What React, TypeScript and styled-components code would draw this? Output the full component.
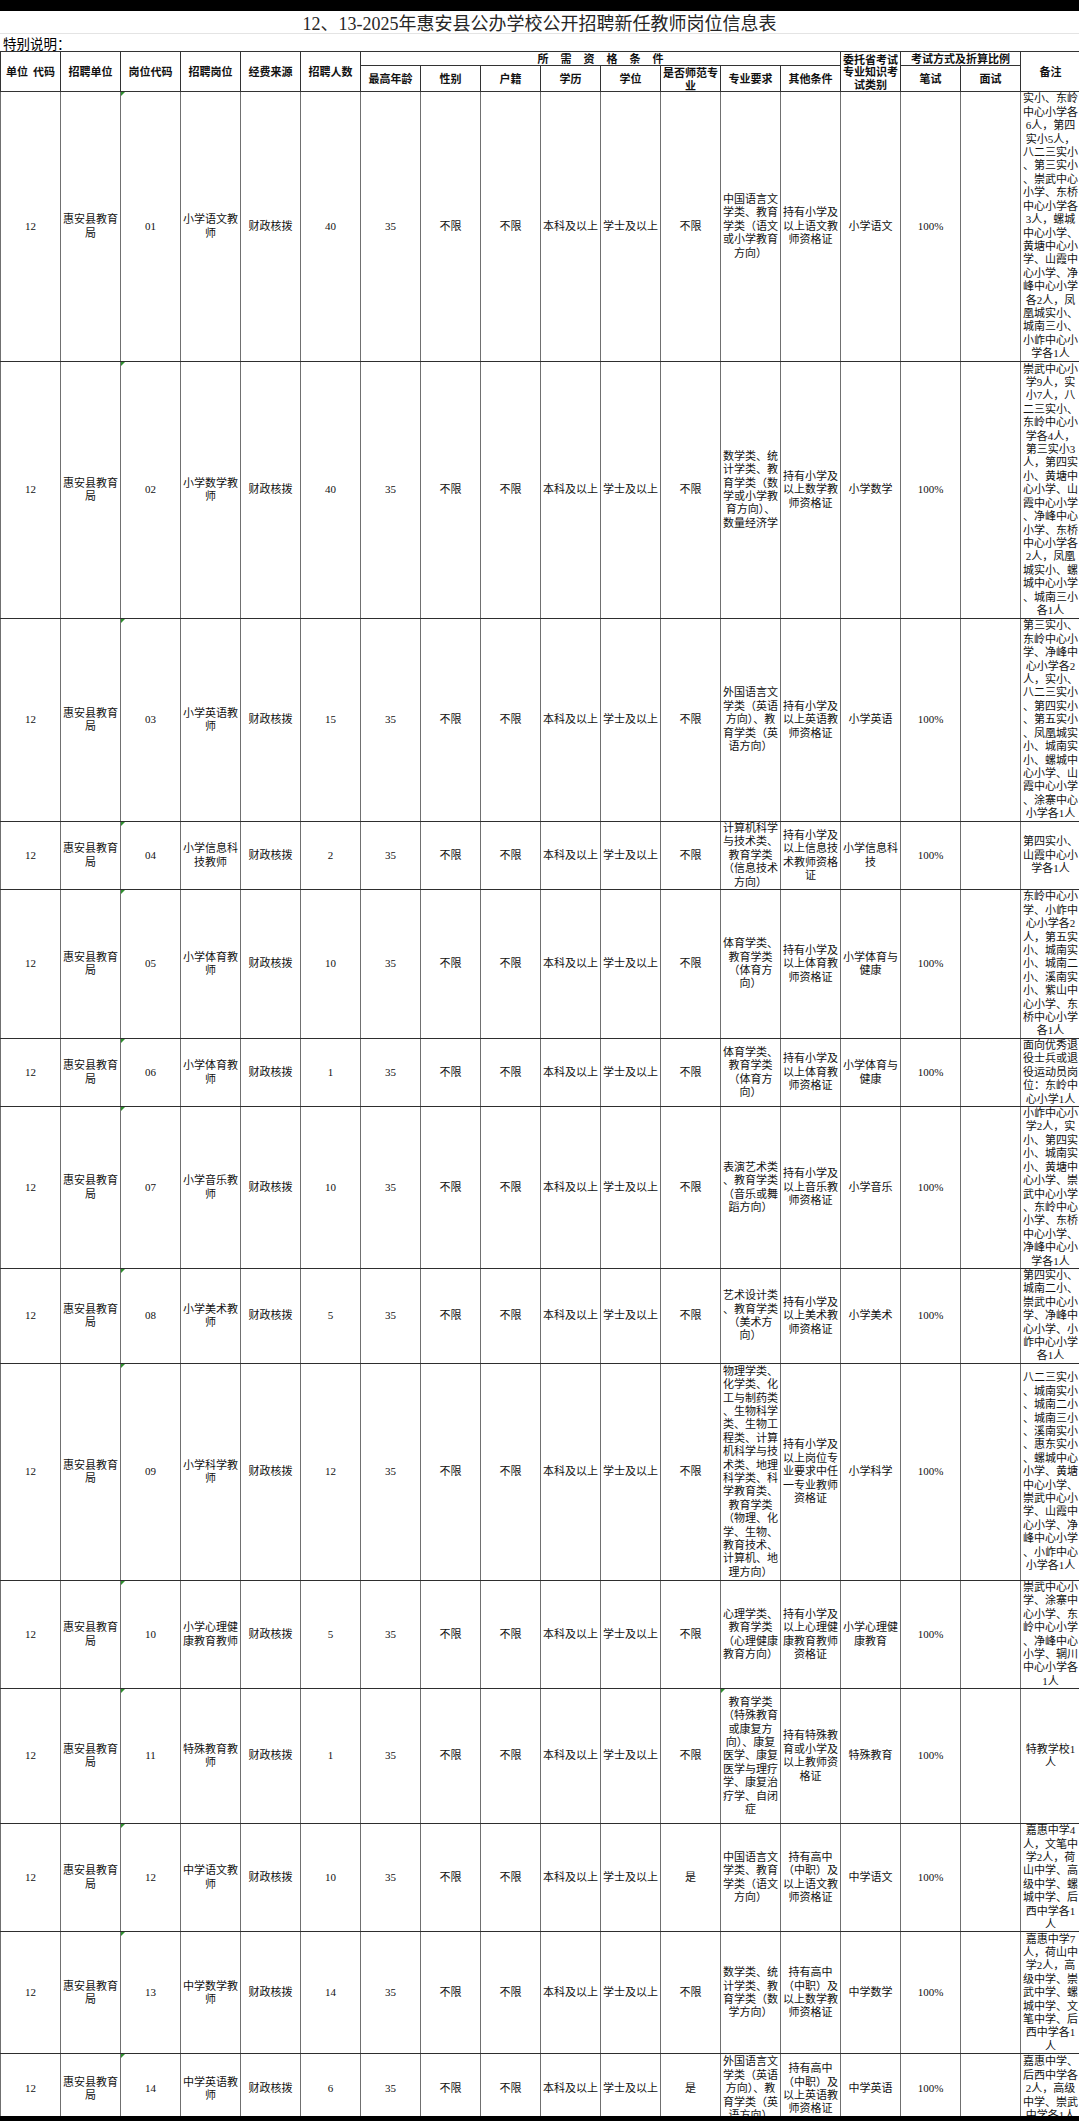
import React from 'react';
import styled, { createGlobalStyle } from 'styled-components';

interface PostRow {
  h: number;
  code: string;
  post: string;
  count: string;
  normal: string;
  major: string;
  other: string;
  exam: string;
  note: string;
  majorFlag?: boolean;
}

const rows: PostRow[] = [
  {
    h: 270,
    code: '01',
    post: '小学语文教\n师',
    count: '40',
    normal: '不限',
    major: '中国语言文\n学类、教育\n学类（语文\n或小学教育\n方向）',
    other: '持有小学及\n以上语文教\n师资格证',
    exam: '小学语文',
    note:
      '实小、东岭\n中心小学各\n6人，第四\n实小5人，\n八二三实小\n、第三实小\n、崇武中心\n小学、东桥\n中心小学各\n3人，螺城\n中心小学、\n黄塘中心小\n学、山霞中\n心小学、净\n峰中心小学\n各2人，凤\n凰城实小、\n城南三小、\n小岞中心小\n学各1人',
  },
  {
    h: 257,
    code: '02',
    post: '小学数学教\n师',
    count: '40',
    normal: '不限',
    major: '数学类、统\n计学类、教\n育学类（数\n学或小学教\n育方向）、\n数量经济学',
    other: '持有小学及\n以上数学教\n师资格证',
    exam: '小学数学',
    note:
      '崇武中心小\n学9人，实\n小7人，八\n二三实小、\n东岭中心小\n学各4人，\n第三实小3\n人，第四实\n小、黄塘中\n心小学、山\n霞中心小学\n、净峰中心\n小学、东桥\n中心小学各\n2人，凤凰\n城实小、螺\n城中心小学\n、城南三小\n各1人',
  },
  {
    h: 203,
    code: '03',
    post: '小学英语教\n师',
    count: '15',
    normal: '不限',
    major: '外国语言文\n学类（英语\n方向）、教\n育学类（英\n语方向）',
    other: '持有小学及\n以上英语教\n师资格证',
    exam: '小学英语',
    note:
      '第三实小、\n东岭中心小\n学、净峰中\n心小学各2\n人，实小、\n八二三实小\n、第四实小\n、第五实小\n、凤凰城实\n小、城南实\n小、螺城中\n心小学、山\n霞中心小学\n、涂寨中心\n小学各1人',
  },
  {
    h: 67,
    code: '04',
    post: '小学信息科\n技教师',
    count: '2',
    normal: '不限',
    major: '计算机科学\n与技术类、\n教育学类\n（信息技术\n方向）',
    other: '持有小学及\n以上信息技\n术教师资格\n证',
    exam: '小学信息科\n技',
    note: '第四实小、\n山霞中心小\n学各1人',
  },
  {
    h: 149,
    code: '05',
    post: '小学体育教\n师',
    count: '10',
    normal: '不限',
    major: '体育学类、\n教育学类\n（体育方\n向）',
    other: '持有小学及\n以上体育教\n师资格证',
    exam: '小学体育与\n健康',
    note:
      '东岭中心小\n学、小岞中\n心小学各2\n人，第五实\n小、城南实\n小、城南二\n小、溪南实\n小、紫山中\n心小学、东\n桥中心小学\n各1人',
  },
  {
    h: 68,
    code: '06',
    post: '小学体育教\n师',
    count: '1',
    normal: '不限',
    major: '体育学类、\n教育学类\n（体育方\n向）',
    other: '持有小学及\n以上体育教\n师资格证',
    exam: '小学体育与\n健康',
    note: '面向优秀退\n役士兵或退\n役运动员岗\n位：东岭中\n心小学1人',
  },
  {
    h: 161,
    code: '07',
    post: '小学音乐教\n师',
    count: '10',
    normal: '不限',
    major: '表演艺术类\n、教育学类\n（音乐或舞\n蹈方向）',
    other: '持有小学及\n以上音乐教\n师资格证',
    exam: '小学音乐',
    note:
      '小岞中心小\n学2人，实\n小、第四实\n小、城南实\n小、黄塘中\n心小学、崇\n武中心小学\n、东岭中心\n小学、东桥\n中心小学、\n净峰中心小\n学各1人',
  },
  {
    h: 95,
    code: '08',
    post: '小学美术教\n师',
    count: '5',
    normal: '不限',
    major: '艺术设计类\n、教育学类\n（美术方\n向）',
    other: '持有小学及\n以上美术教\n师资格证',
    exam: '小学美术',
    note: '第四实小、\n城南二小、\n崇武中心小\n学、净峰中\n心小学、小\n岞中心小学\n各1人',
  },
  {
    h: 217,
    code: '09',
    post: '小学科学教\n师',
    count: '12',
    normal: '不限',
    major:
      '物理学类、\n化学类、化\n工与制药类\n、生物科学\n类、生物工\n程类、计算\n机科学与技\n术类、地理\n科学类、科\n学教育类、\n教育学类\n（物理、化\n学、生物、\n教育技术、\n计算机、地\n理方向）',
    other: '持有小学及\n以上岗位专\n业要求中任\n一专业教师\n资格证',
    exam: '小学科学',
    note:
      '八二三实小\n、城南实小\n、城南二小\n、城南三小\n、溪南实小\n、惠东实小\n、螺城中心\n小学、黄塘\n中心小学、\n崇武中心小\n学、山霞中\n心小学、净\n峰中心小学\n、小岞中心\n小学各1人',
  },
  {
    h: 107,
    code: '10',
    post: '小学心理健\n康教育教师',
    count: '5',
    normal: '不限',
    major: '心理学类、\n教育学类\n（心理健康\n教育方向）',
    other: '持有小学及\n以上心理健\n康教育教师\n资格证',
    exam: '小学心理健\n康教育',
    note: '崇武中心小\n学、涂寨中\n心小学、东\n岭中心小学\n、净峰中心\n小学、辋川\n中心小学各\n1人',
  },
  {
    h: 135,
    code: '11',
    post: '特殊教育教\n师',
    count: '1',
    normal: '不限',
    major: '教育学类\n（特殊教育\n或康复方\n向）、康复\n医学、康复\n医学与理疗\n学、康复治\n疗学、自闭\n症',
    other: '持有特殊教\n育或小学及\n以上教师资\n格证',
    exam: '特殊教育',
    note: '特教学校1\n人',
    majorFlag: true,
  },
  {
    h: 108,
    code: '12',
    post: '中学语文教\n师',
    count: '10',
    normal: '是',
    major: '中国语言文\n学类、教育\n学类（语文\n方向）',
    other: '持有高中\n（中职）及\n以上语文教\n师资格证',
    exam: '中学语文',
    note: '嘉惠中学4\n人，文笔中\n学2人，荷\n山中学、高\n级中学、螺\n城中学、后\n西中学各1\n人',
  },
  {
    h: 122,
    code: '13',
    post: '中学数学教\n师',
    count: '14',
    normal: '不限',
    major: '数学类、统\n计学类、教\n育学类（数\n学方向）',
    other: '持有高中\n（中职）及\n以上数学教\n师资格证',
    exam: '中学数学',
    note: '嘉惠中学7\n人，荷山中\n学2人，高\n级中学、崇\n武中学、螺\n城中学、文\n笔中学、后\n西中学各1\n人',
  },
  {
    h: 70,
    code: '14',
    post: '中学英语教\n师',
    count: '6',
    normal: '是',
    major: '外国语言文\n学类（英语\n方向）、教\n育学类（英\n语方向）',
    other: '持有高中\n（中职）及\n以上英语教\n师资格证',
    exam: '中学英语',
    note: '嘉惠中学、\n后西中学各\n2人，高级\n中学、崇武\n中学各1人',
  },
];

const GlobalStyle = createGlobalStyle`
  html, body {
    margin: 0;
    padding: 0;
    background: #000;
  }
  body {
    font-family: "Liberation Serif", "Noto Sans CJK SC", serif;
  }
`;

const Page = styled.div`
  width: 1079px;
  height: 2121px;
  display: flex;
  flex-direction: column;
  background: #000;
  overflow: hidden;
`;

const TopBar = styled.div`
  flex: none;
  height: 11px;
  background: #000;
`;

const BottomBar = styled.div`
  flex: none;
  height: 5px;
  background: #000;
`;

const Sheet = styled.div`
  flex: 1;
  min-height: 0;
  background: #fff;
  overflow: hidden;
`;

const Title = styled.h1`
  margin: 0;
  height: 22px;
  line-height: 27px;
  font-size: 18px;
  font-weight: 400;
  text-align: center;
  color: #262626;
  font-family: "Liberation Serif", "Noto Sans CJK SC", serif;
  border-bottom: 1px solid #e4e4e4;
`;

const Note = styled.div`
  height: 17px;
  line-height: 18px;
  padding-left: 3px;
  font-size: 13.5px;
  color: #000;
  font-family: "Noto Sans CJK SC", sans-serif;
`;

const Table = styled.table`
  width: 1080px;
  table-layout: fixed;
  border-collapse: collapse;
  font-family: "Liberation Serif", "Noto Sans CJK SC", serif;
`;

const Col = styled.col`
  width: 60px;
`;

const Row = styled.tr<{ $h: number }>`
  height: ${p => p.$h}px;
`;

const HeadCell = styled.th<{ $spread?: boolean }>`
  padding: 0;
  border: 1px solid #333;
  font-family: "Noto Sans CJK SC", sans-serif;
  font-size: 11px;
  line-height: 12.5px;
  font-weight: 700;
  color: #111;
  text-align: center;
  vertical-align: middle;
  white-space: pre;
  ${p => p.$spread && 'letter-spacing: 12px; text-indent: 12px;'}
`;

const Cell = styled.td<{ $flag?: boolean }>`
  position: relative;
  padding: 0;
  border-left: 1px solid #707070;
  border-right: 1px solid #707070;
  border-top: 1px solid #2e2e2e;
  border-bottom: 1px solid #2e2e2e;
  font-size: 11px;
  line-height: 13.4px;
  color: #111;
  text-align: center;
  vertical-align: middle;
  white-space: pre;
  overflow: hidden;

  ${p =>
    p.$flag &&
    `&::before {
      content: '';
      position: absolute;
      top: 0;
      left: 0;
      border-top: 4px solid #2f8f2f;
      border-right: 4px solid transparent;
    }`}
`;

const App = (): JSX.Element => {
  return (
    <>
      <GlobalStyle />
      <Page>
        <TopBar />
        <Sheet>
          <Title>12、13-2025年惠安县公办学校公开招聘新任教师岗位信息表</Title>
          <Note>特别说明：</Note>
          <Table>
            <colgroup>
              {Array.from({ length: 18 }).map((_, i) => (
                <Col key={i} />
              ))}
            </colgroup>
            <thead>
              <Row $h={14}>
                <HeadCell rowSpan={2}>{'单位  代码'}</HeadCell>
                <HeadCell rowSpan={2}>招聘单位</HeadCell>
                <HeadCell rowSpan={2}>岗位代码</HeadCell>
                <HeadCell rowSpan={2}>招聘岗位</HeadCell>
                <HeadCell rowSpan={2}>经费来源</HeadCell>
                <HeadCell rowSpan={2}>招聘人数</HeadCell>
                <HeadCell colSpan={8} $spread>
                  所需资格条件
                </HeadCell>
                <HeadCell rowSpan={2}>{'委托省考试\n专业知识考\n试类别'}</HeadCell>
                <HeadCell colSpan={2}>考试方式及折算比例</HeadCell>
                <HeadCell rowSpan={2}>备注</HeadCell>
              </Row>
              <Row $h={25}>
                <HeadCell>最高年龄</HeadCell>
                <HeadCell>性别</HeadCell>
                <HeadCell>户籍</HeadCell>
                <HeadCell>学历</HeadCell>
                <HeadCell>学位</HeadCell>
                <HeadCell>{'是否师范专\n业'}</HeadCell>
                <HeadCell>专业要求</HeadCell>
                <HeadCell>其他条件</HeadCell>
                <HeadCell>笔试</HeadCell>
                <HeadCell>面试</HeadCell>
              </Row>
            </thead>
            <tbody>
              {rows.map(r => (
                <Row key={r.code} $h={r.h}>
                  <Cell>12</Cell>
                  <Cell>{'惠安县教育\n局'}</Cell>
                  <Cell $flag>{r.code}</Cell>
                  <Cell>{r.post}</Cell>
                  <Cell>财政核拨</Cell>
                  <Cell>{r.count}</Cell>
                  <Cell>35</Cell>
                  <Cell>不限</Cell>
                  <Cell>不限</Cell>
                  <Cell>本科及以上</Cell>
                  <Cell>学士及以上</Cell>
                  <Cell>{r.normal}</Cell>
                  <Cell $flag={r.majorFlag}>{r.major}</Cell>
                  <Cell>{r.other}</Cell>
                  <Cell>{r.exam}</Cell>
                  <Cell>100%</Cell>
                  <Cell />
                  <Cell>{r.note}</Cell>
                </Row>
              ))}
            </tbody>
          </Table>
        </Sheet>
        <BottomBar />
      </Page>
    </>
  );
};

export default App;
